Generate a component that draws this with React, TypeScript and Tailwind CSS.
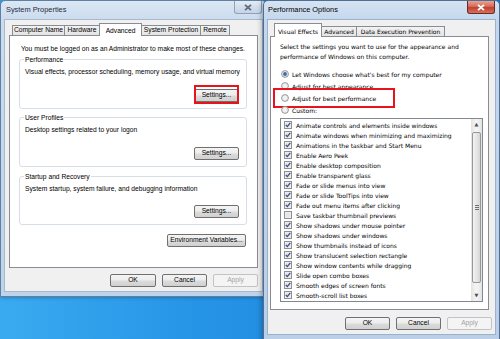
import React from "react";

const items: [string, boolean][] = [
  ["Animate controls and elements inside windows", true],
  ["Animate windows when minimizing and maximizing", true],
  ["Animations in the taskbar and Start Menu", true],
  ["Enable Aero Peek", true],
  ["Enable desktop composition", true],
  ["Enable transparent glass", true],
  ["Fade or slide menus into view", true],
  ["Fade or slide ToolTips into view", true],
  ["Fade out menu items after clicking", true],
  ["Save taskbar thumbnail previews", false],
  ["Show shadows under mouse pointer", true],
  ["Show shadows under windows", true],
  ["Show thumbnails instead of icons", true],
  ["Show translucent selection rectangle", true],
  ["Show window contents while dragging", true],
  ["Slide open combo boxes", true],
  ["Smooth edges of screen fonts", true],
  ["Smooth-scroll list boxes", true],
];

function Btn({
  label,
  cls,
  disabled,
}: {
  label: string;
  cls: string;
  disabled?: boolean;
}) {
  return (
    <div
      className={
        "flex h-[13px] shrink-0 items-center justify-center rounded-[2px] border leading-none " +
        (disabled
          ? "border-[#c3c3c3] bg-[#f4f4f4] text-[#a3a3a3] "
          : "border-[#707070] bg-[linear-gradient(180deg,#f4f4f4_0%,#ececec_48%,#dcdcdc_52%,#d0d0d0_100%)] text-black ") +
        cls
      }
    >
      {label}
    </div>
  );
}

function CloseBtn({ active }: { active: boolean }) {
  return (
    <div
      className={
        "flex h-[13px] w-[28px] items-center justify-center rounded-b-[3px] border border-t-0 " +
        (active
          ? "border-[#6b2a28] bg-[linear-gradient(180deg,#e8a493_0%,#d46c5a_45%,#c3412e_55%,#d5715d_100%)]"
          : "border-[#8ea3bb] bg-[linear-gradient(180deg,#e4ecf5_0%,#d3dfec_50%,#c5d4e5_100%)]")
      }
    >
      <svg width="8" height="7" viewBox="0 0 8 7">
        <path
          d="M1 0.8 L7 6.2 M7 0.8 L1 6.2"
          stroke={active ? "#ffffff" : "#5d6b7c"}
          strokeWidth="1.8"
        />
      </svg>
    </div>
  );
}

function CheckBox({ checked }: { checked: boolean }) {
  return (
    <svg width="8" height="8" viewBox="0 0 8 8" className="shrink-0">
      <rect x="0.5" y="0.5" width="7" height="7" fill="#f6f6f6" stroke="#8f8f8f" />
      <rect x="1.5" y="1.5" width="5" height="5" fill="#e4e6e9" />
      {checked && (
        <path d="M1.8 4 L3.3 5.6 L6.3 1.8" stroke="#3c4e86" strokeWidth="1.3" fill="none" />
      )}
    </svg>
  );
}

function Radio({ sel }: { sel: boolean }) {
  return (
    <svg width="8" height="8" viewBox="0 0 8 8" className="shrink-0">
      <circle cx="4" cy="4" r="3.4" fill="#f0f0f0" stroke="#8a8a8a" strokeWidth="0.9" />
      {sel && <circle cx="4" cy="4" r="1.9" fill="#3b69a5" />}
    </svg>
  );
}

function GroupBox({
  title,
  text,
  cls,
  first,
}: {
  title: string;
  text: string;
  cls: string;
  first?: boolean;
}) {
  return (
    <div
      className={
        "relative flex flex-col rounded-[3px] border border-[#d5dfe5] pl-[5px] pr-[7px] pt-[8px] pb-[6px] " +
        cls
      }
    >
      <span className="absolute -top-[4px] left-[4px] bg-white px-[1px] leading-[8px]">{title}</span>
      <div className="leading-[8px] whitespace-nowrap">{text}</div>
      <div className="flex-1" />
      <div className="relative flex justify-end">
        <Btn label="Settings..." cls="w-[45px]" />
        {first && (
          <div className="absolute -top-[4px] right-0 h-[19px] w-[45px] border-2 border-[#e8141c]" />
        )}
      </div>
    </div>
  );
}

export default function App() {
  return (
    <div className="relative h-[339px] w-[500px] overflow-hidden bg-[linear-gradient(90deg,#3aaaf0_0%,#2694e6_40%,#1b7fd9_100%)] font-['Liberation_Sans',Arial,sans-serif] text-black">
      {/* System Properties window */}
      <div className="absolute left-0 top-0 flex h-[297px] w-[267px] flex-col rounded-t-[5px] border border-[#5f7fa3] bg-[linear-gradient(180deg,#dbe7f4_0px,#cbdcee_19px,#bfd3e9_100%)] shadow-[0_0_4px_rgba(0,0,0,0.35)]">
        <div className="flex h-[18px] shrink-0 items-start justify-between pl-[5px] pr-[4px]">
          <span className="mt-[4px] text-[7.4px] leading-[9px] text-[#1e2b3a]">System Properties</span>
          <CloseBtn active={false} />
        </div>
        <div className="mx-[3px] flex h-[273px] flex-col border border-[#a5b9cf] bg-[#f0f0f0] px-[4px] pt-[3px] text-[6.7px]">
          <div className="flex h-[12px] items-end pl-[3px]">
            <div className="flex h-[10px] w-[53px] items-center justify-center border border-b-0 border-[#898c95] bg-[linear-gradient(180deg,#f3f3f3,#e4e4e4)]">Computer Name</div>
            <div className="-ml-px flex h-[10px] w-[36px] items-center justify-center border border-b-0 border-[#898c95] bg-[linear-gradient(180deg,#f3f3f3,#e4e4e4)]">Hardware</div>
            <div className="relative z-10 -mb-px -ml-px flex h-[13px] w-[43px] items-start justify-center border border-b-0 border-[#898c95] bg-white pt-[2px]">Advanced</div>
            <div className="-ml-px flex h-[10px] w-[60px] items-center justify-center border border-b-0 border-[#898c95] bg-[linear-gradient(180deg,#f3f3f3,#e4e4e4)]">System Protection</div>
            <div className="-ml-px flex h-[10px] w-[30px] items-center justify-center border border-b-0 border-[#898c95] bg-[linear-gradient(180deg,#f3f3f3,#e4e4e4)]">Remote</div>
          </div>
          <div className="flex h-[233px] w-[249px] flex-col border border-[#898c95] bg-white pl-[11px] pt-[9px]">
            <div className="leading-[8px] whitespace-nowrap">You must be logged on as an Administrator to make most of these changes.</div>
            <div className="-ml-[2px] mt-[6px] w-[228px]">
              <GroupBox
                first
                title="Performance"
                text="Visual effects, processor scheduling, memory usage, and virtual memory"
                cls="h-[50px]"
              />
              <GroupBox title="User Profiles" text="Desktop settings related to your logon" cls="mt-[8px] h-[50px]" />
              <GroupBox
                title="Startup and Recovery"
                text="System startup, system failure, and debugging information"
                cls="mt-[9px] h-[49px]"
              />
              <div className="mt-[9px] flex justify-end pr-[1px]">
                <Btn label="Environment Variables..." cls="w-[79px]" />
              </div>
            </div>
          </div>
          <div className="mt-[6px] flex w-[249px] justify-end gap-[6px]">
            <Btn label="OK" cls="w-[46px]" />
            <Btn label="Cancel" cls="w-[45px]" />
            <Btn label="Apply" cls="w-[45px]" disabled />
          </div>
        </div>
      </div>

      {/* Performance Options window */}
      <div className="absolute left-[263px] top-0 flex h-[346px] w-[237px] flex-col rounded-t-[5px] border border-[#4e6f95] bg-[linear-gradient(180deg,#d6e4f2_0px,#c4d7ec_19px,#b9cfe7_100%)] shadow-[0_0_6px_rgba(0,0,0,0.45)]">
        <div className="flex h-[18px] shrink-0 items-start justify-between pl-[4px] pr-[4px]">
          <span className="mt-[4px] text-[7.4px] leading-[9px] text-black">Performance Options</span>
          <CloseBtn active />
        </div>
        <div className="ml-[3px] mr-[3px] flex h-[316px] flex-col border border-[#9cb2ca] bg-[#f0f0f0] pl-[2px] pt-[3px] font-['DejaVu_Sans',Verdana,sans-serif] text-[6px]">
          <div className="flex h-[13px] items-end pl-[4px]">
            <div className="relative z-10 -mb-px flex h-[14px] w-[48px] items-start justify-center border border-b-0 border-[#898c95] bg-white pt-[3px]">Visual Effects</div>
            <div className="-ml-px flex h-[10px] w-[36px] items-center justify-center border border-b-0 border-[#898c95] bg-[linear-gradient(180deg,#f3f3f3,#e4e4e4)]">Advanced</div>
            <div className="-ml-px flex h-[10px] w-[89px] items-center justify-center border border-b-0 border-[#898c95] bg-[linear-gradient(180deg,#f3f3f3,#e4e4e4)]">Data Execution Prevention</div>
          </div>
          <div className="flex h-[274px] w-[219px] flex-col border border-[#898c95] bg-white pl-[9px] pt-[5px]">
            <div className="leading-[10px] whitespace-nowrap">
              Select the settings you want to use for the appearance and
              <br />
              performance of Windows on this computer.
            </div>
            <div className="mt-[6px] flex flex-col">
              {[
                ["Let Windows choose what's best for my computer", true],
                ["Adjust for best appearance", false],
                ["Adjust for best performance", false],
                ["Custom:", false],
              ].map(([t, s], i) => (
                <div key={i} className="relative flex h-[12px] items-center gap-[3px] pl-[1px] whitespace-nowrap">
                  <Radio sel={s as boolean} />
                  <span>{t as string}</span>
                  {i === 2 && (
                    <div className="absolute -left-[7px] top-[-4px] h-[20px] w-[122px] border-2 border-[#e8141c]" />
                  )}
                </div>
              ))}
            </div>
            <div className="mt-[2px] flex h-[184px] w-[203px] border border-[#828790] bg-white">
              <div className="flex flex-1 flex-col pl-[3px] pt-[1px]">
                {items.map(([t, c], i) => (
                  <div key={i} className="flex h-[10px] items-center gap-[4px] whitespace-nowrap">
                    <CheckBox checked={c} />
                    <span>{t}</span>
                  </div>
                ))}
              </div>
              <div className="flex w-[11px] flex-col bg-[linear-gradient(90deg,#e3e3e3,#f3f3f3_40%,#f3f3f3_60%,#e3e3e3)]">
                <div className="flex h-[11px] items-center justify-center text-[5px] text-[#4d4d4d]">▲</div>
                <div className="mx-[1px] mt-[2px] flex h-[151px] items-center justify-center rounded-[2px] border border-[#979797] bg-[linear-gradient(90deg,#f2f2f2,#e6e6e6_50%,#d5d5d5)]">
                  <div className="flex flex-col gap-[1px]">
                    <div className="h-px w-[4px] bg-[#707070]" />
                    <div className="h-px w-[4px] bg-[#707070]" />
                    <div className="h-px w-[4px] bg-[#707070]" />
                  </div>
                </div>
                <div className="flex-1" />
                <div className="flex h-[11px] items-center justify-center text-[5px] text-[#4d4d4d]">▼</div>
              </div>
            </div>
          </div>
          <div className="mt-[7px] flex w-[222px] justify-end gap-[6px] font-['Liberation_Sans',Arial,sans-serif] text-[6.7px]">
            <Btn label="OK" cls="w-[45px]" />
            <Btn label="Cancel" cls="w-[45px]" />
            <Btn label="Apply" cls="w-[45px]" disabled />
          </div>
        </div>
      </div>
    </div>
  );
}
